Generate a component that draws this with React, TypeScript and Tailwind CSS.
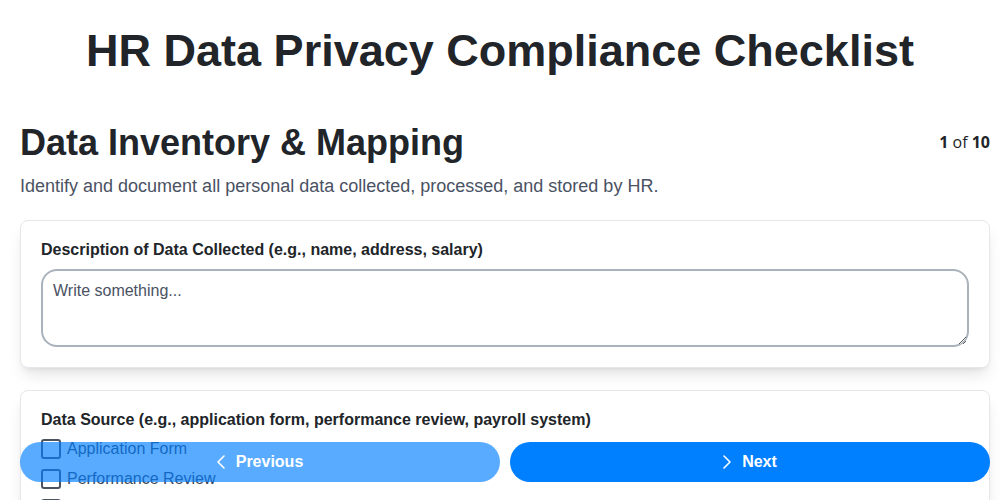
import { ChevronLeft, ChevronRight } from "lucide-react";

const SOURCES = ["Application Form", "Performance Review", "Payroll System"];

export default function App() {
  return (
    <div className="min-h-screen bg-white text-[#212529] font-['Liberation_Sans',Arial,sans-serif]">
      <h1 className="text-center text-[45px] font-bold leading-none pt-[28px] pb-[47px]">
        HR Data Privacy Compliance Checklist
      </h1>
      <div className="pl-5 pr-2.5 pb-24">
        <div className="flex items-start justify-between">
          <h2 className="text-4xl font-bold leading-[45px]">Data Inventory &amp; Mapping</h2>
          <div className="pt-[10px] text-base font-['Open_Sans',sans-serif] text-[#212529]">
            <span className="font-bold">1</span> of <span className="font-bold">10</span>
          </div>
        </div>
        <p className="mt-[7px] text-lg text-[#4a5263]">
          Identify and document all personal data collected, processed, and stored by HR.
        </p>

        <div className="mt-5 flex flex-col gap-[22px]">
          <section className="rounded-lg border border-[#e5e7eb] bg-white px-5 pt-[17px] pb-5 shadow-lg">
            <label className="block text-base font-bold mb-[7px]">
              Description of Data Collected (e.g., name, address, salary)
            </label>
            <textarea
              placeholder="Write something..."
              className="block w-full h-[78px] rounded-2xl border-2 border-[#aab2bb] px-2.5 py-2 text-base placeholder:text-[#4a5263] outline-none"
            />
          </section>

          <section className="rounded-lg border border-[#e5e7eb] bg-white px-5 pt-[17px] pb-5 shadow-lg">
            <label className="block text-base font-bold mb-[5px]">
              Data Source (e.g., application form, performance review, payroll system)
            </label>
            <div className="flex flex-col gap-1.5">
              {SOURCES.map((s) => (
                <label key={s} className="flex items-center gap-1.5 text-base text-[#3b4252]">
                  <span className="w-5 h-5 rounded-[3px] border-2 border-[#4b5260] bg-white" />
                  {s}
                </label>
              ))}
            </div>
          </section>
        </div>
      </div>

      <div className="fixed bottom-[18px] left-5 right-2.5 flex gap-2.5">
        <button className="flex-1 h-10 rounded-full bg-[#007fff] opacity-65 text-white font-bold text-base flex items-center justify-center gap-[3px] pr-2">
          <ChevronLeft size={24} strokeWidth={1.6} />
          Previous
        </button>
        <button className="flex-1 h-10 rounded-full bg-[#007fff] text-white font-bold text-base flex items-center justify-center gap-[3px] pr-2">
          <ChevronRight size={24} strokeWidth={1.6} />
          Next
        </button>
      </div>
    </div>
  );
}
